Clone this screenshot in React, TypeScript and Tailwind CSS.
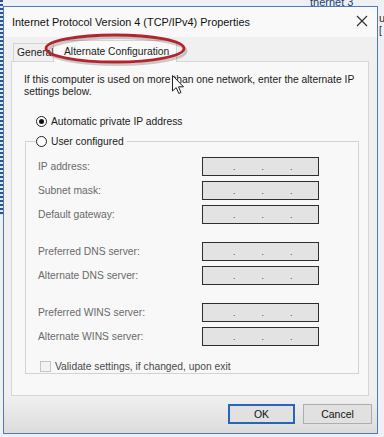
import React from "react";

const font = { fontFamily: '"Liberation Sans", Arial, sans-serif' };

function IpBox() {
  return (
    <div className="relative w-[117px] h-[19px] border border-[#2e2e2e] bg-[#e3e3e3] flex items-end pb-[3px]">
      <span className="ml-[30px] text-[9px] leading-[9px] text-[#444]">.</span>
      <span className="ml-[26px] text-[9px] leading-[9px] text-[#444]">.</span>
      <span className="ml-[26px] text-[9px] leading-[9px] text-[#444]">.</span>
    </div>
  );
}

function Row({ label, className = "" }: { label: string; className?: string }) {
  return (
    <div className={`flex items-center h-[19px] pl-[12px] ${className}`}>
      <div className="w-[164px] text-[#6a6a6a]">{label}</div>
      <IpBox />
    </div>
  );
}

export default function App() {
  return (
    <div
      className="relative w-[384px] h-[437px] overflow-hidden bg-[#eef0f3] text-[10.3px] leading-[13px] text-[#1b1b1b]"
      style={font}
    >
      {/* desktop fragments behind the dialog */}
      <div className="absolute left-0 top-0 w-[3px] h-[215px] bg-[repeating-linear-gradient(to_bottom,#2c5590_0px,#2c5590_2px,#dfe6f0_2px,#dfe6f0_4px)]" />
      <div className="absolute left-[310px] top-[-3px] text-[11px] leading-[11px] text-[#22406e]">thernet 3</div>
      <div className="absolute left-[379px] top-[13px] text-[11px] leading-[11px] text-[#222]">u</div>
      <div className="absolute left-[379px] top-[26px] text-[10px] leading-[10px] text-[#222]">[</div>

      {/* dialog window */}
      <div className="relative z-10 ml-[3px] mt-[6px] w-[375px] h-[428px] border border-[#4b7bbd] bg-[#f0f0f0] flex flex-col">
        {/* title bar */}
        <div className="h-[30px] bg-[#f9f9f9] flex items-center justify-between pl-[8px] pr-[9px]">
          <span className="text-[10.9px] text-[#111]">Internet Protocol Version 4 (TCP/IPv4) Properties</span>
          <svg width="12" height="12" viewBox="0 0 12 12" className="mt-[-2px]">
            <path d="M1 1 L11 11 M11 1 L1 11" stroke="#333" strokeWidth="1.2" fill="none" />
          </svg>
        </div>

        {/* tabs */}
        <div className="h-[24px] flex items-end pl-[9px]">
          <div className="h-[18px] w-[42px] border border-b-0 border-[#d4d4d4] bg-[#f0f0f0] pl-[3px] flex items-center overflow-hidden">
            General
          </div>
          <div className="relative z-10 ml-[-2px] mb-[-1px] h-[22px] w-[124px] border border-b-0 border-[#d4d4d4] bg-[#f9f9f9] pl-[10px] flex items-center">
            Alternate Configuration
          </div>
        </div>

        {/* tab panel */}
        <div className="ml-[7px] w-[358px] h-[335px] border border-[#d6d6d6] bg-[#f8f8f8] pt-[12px]">
          <p className="pl-[12px] pr-[4px] leading-[12px]">
            If this computer is used on more than one network, enter the alternate IP settings below.
          </p>

          <div className="mt-[16px] ml-[24px] h-[14px] flex items-center gap-[4px]">
            <div className="w-[11px] h-[11px] rounded-full border border-[#222] bg-white flex items-center justify-center">
              <div className="w-[5px] h-[5px] rounded-full bg-[#111]" />
            </div>
            <span>Automatic private IP address</span>
          </div>

          <fieldset className="mt-[6px] ml-[13px] w-[334px] h-[240px] border border-[#d3d3d3]">
            <legend className="ml-[10px] pr-[3px] flex items-center gap-[4px] h-[14px] bg-[#f8f8f8]">
              <span className="w-[11px] h-[11px] rounded-full border border-[#222] bg-white" />
              <span>User configured</span>
            </legend>
            <div className="pt-[9px]">
              <Row label="IP address:" />
              <Row label="Subnet mask:" className="mt-[5px]" />
              <Row label="Default gateway:" className="mt-[5px]" />
              <Row label="Preferred DNS server:" className="mt-[18px]" />
              <Row label="Alternate DNS server:" className="mt-[5px]" />
              <Row label="Preferred WINS server:" className="mt-[18px]" />
              <Row label="Alternate WINS server:" className="mt-[5px]" />
              <div className="mt-[14px] ml-[14px] h-[12px] flex items-center gap-[4px]">
                <div className="w-[11px] h-[11px] border border-[#c4c4c4] bg-[#f3f3f3]" />
                <span className="text-[#4a4a4a]">Validate settings, if changed, upon exit</span>
              </div>
            </div>
          </fieldset>
        </div>

        {/* buttons */}
        <div className="flex-1 bg-gradient-to-b from-[#f0f0f0] to-[#dcdcdc] flex items-start justify-end pt-[8px] pr-[5px] gap-[8px]">
          <button className="w-[67px] h-[20px] border-2 border-[#2765b8] bg-[#e1e1e1] text-[10.5px] text-[#111]">
            OK
          </button>
          <button className="w-[69px] h-[20px] border border-[#adadad] bg-[#e1e1e1] text-[10.5px] text-[#111]">
            Cancel
          </button>
        </div>
      </div>

      {/* red annotation ellipse */}
      <svg className="absolute z-20 left-[43px] top-[31px]" width="146" height="36" viewBox="0 0 146 36">
        <ellipse cx="73" cy="19" rx="69" ry="13.5" fill="none" stroke="#00000030" strokeWidth="3" transform="translate(1 1)" />
        <ellipse cx="72" cy="17.5" rx="69" ry="13.5" fill="none" stroke="#b5242a" strokeWidth="2.8" />
      </svg>

      {/* mouse cursor */}
      <svg className="absolute z-20 left-[172px] top-[75px]" width="13" height="21" viewBox="0 0 13 21">
        <path d="M0.5 0.5 L0.5 16 L4.2 12.6 L6.8 18.5 L9 17.5 L6.5 11.8 L11.5 11.8 Z" fill="#fff" stroke="#222" strokeWidth="1" strokeLinejoin="round" />
      </svg>
    </div>
  );
}
